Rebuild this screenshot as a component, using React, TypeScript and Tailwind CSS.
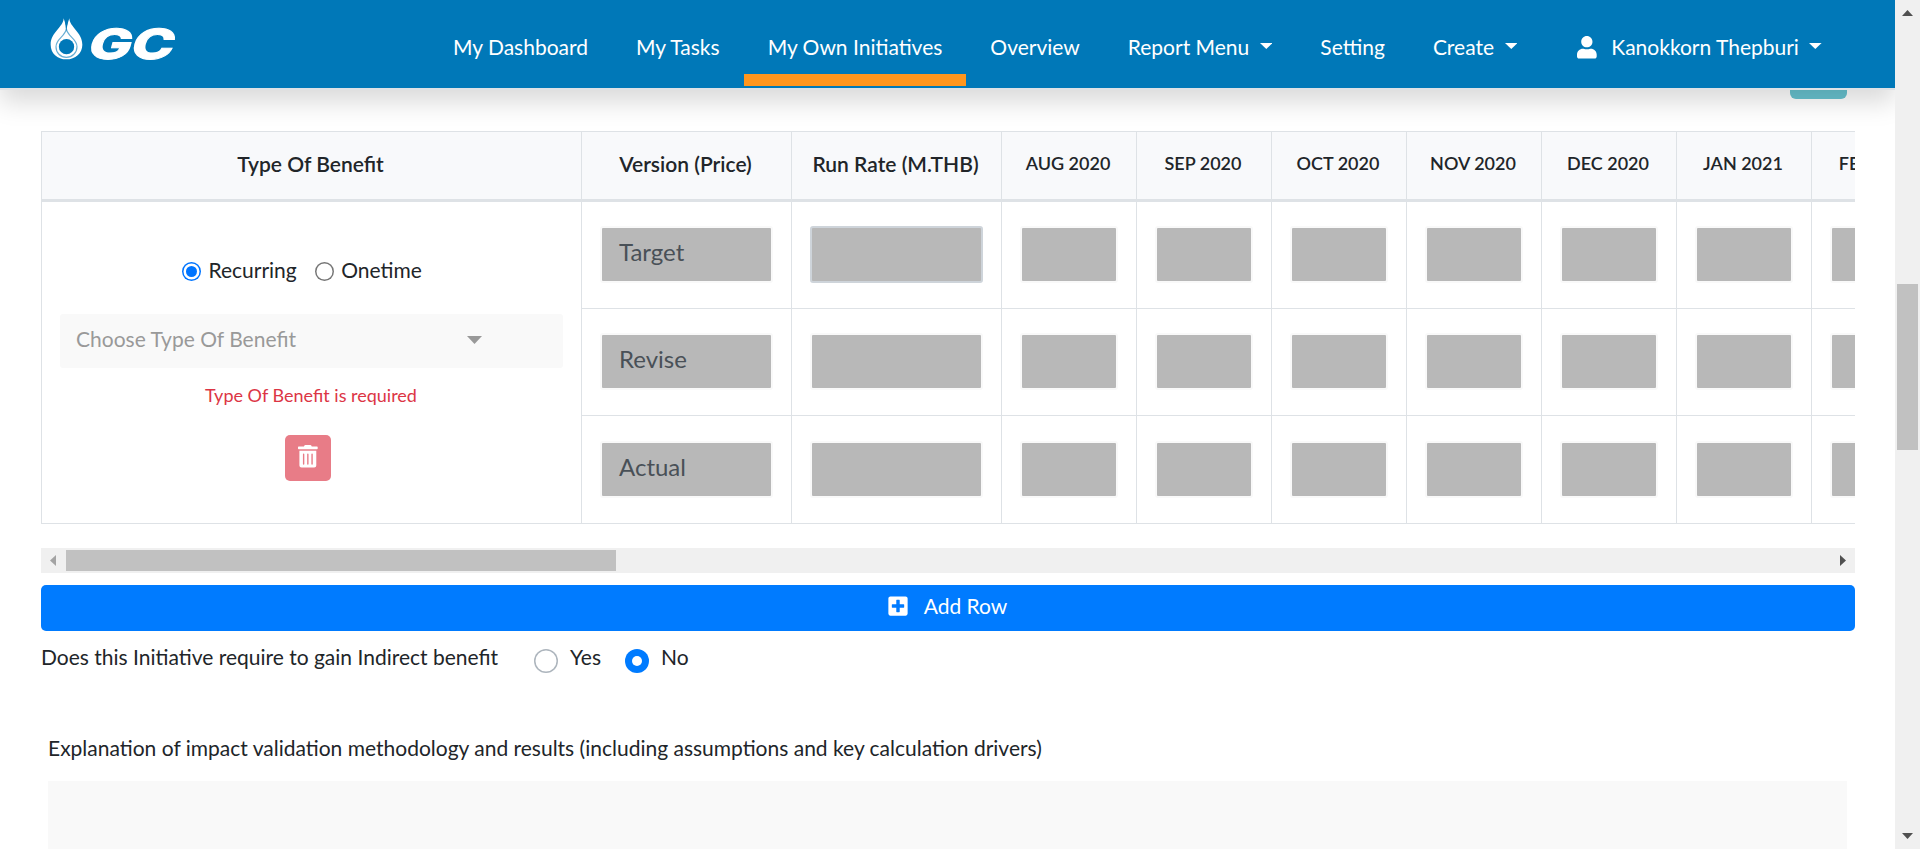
import type { ReactNode } from "react";
import { FaPlusSquare, FaTrashAlt, FaUser } from "react-icons/fa";

const months = ["AUG 2020", "SEP 2020", "OCT 2020", "NOV 2020", "DEC 2020", "JAN 2021", "FEB 2021"];
const versions = ["Target", "Revise", "Actual"];

function Caret({ className = "" }: { className?: string }) {
  return (
    <svg viewBox="0 0 12 6" className={`h-[6px] w-[12.6px] shrink-0 fill-current ${className}`} preserveAspectRatio="none">
      <path d="M0 0h12L6 6z" />
    </svg>
  );
}

function Logo() {
  return (
    <svg viewBox="0 0 408 150" className="mt-[14px] h-[50px] w-[136px] shrink-0 overflow-visible">
      <path
        d="M53 13C52 40 14 55 14 92c0 26 20 44 47 44s48-18 48-44C109 55 71 40 70 13l-7 22h-3z"
        fill="#fff"
      />
      <path d="M56 10l3 30 2 12 2-12 4-30z" fill="#0078b8" />
      <path
        d="M61 44c-3 24-31 30-31 54 0 18 13 32 31 32s32-14 32-32c0-24-29-30-32-54z"
        fill="none"
        stroke="#0078b8"
        strokeOpacity="0.6"
        strokeWidth="3.500"
      />
      <circle cx="61.500" cy="98" r="23" fill="#0078b8" />
      <text
        transform="skewX(-15)"
        x="156"
        y="135"
        textLength="256"
        lengthAdjust="spacingAndGlyphs"
        fill="#fff"
        stroke="#fff"
        strokeWidth="3"
        className="font-['Inter','Liberation_Sans',sans-serif] text-[125px] font-extrabold"
      >
        GC
      </text>
    </svg>
  );
}

function NavItem({ children, active, caret }: { children: ReactNode; active?: boolean; caret?: boolean }) {
  return (
    <a className="flex h-[88px] shrink-0 flex-col pt-[31px]">
      <span className="flex px-6 leading-8 whitespace-nowrap">
        {children}
        {caret && <Caret className="mt-[12px] ml-[10.500px]" />}
      </span>
      {active && <span className="mt-[11px] h-3 bg-[#ff961e]" />}
    </a>
  );
}

function Header() {
  return (
    <header className="relative z-10 flex h-[90px] shrink-0 border-b-2 border-[#dee2e6] bg-[#0078b8] pl-[46px] text-white shadow-[0_12px_24px_rgba(0,0,0,0.15)]">
      <Logo />
      <nav className="ml-[247px] flex">
        <NavItem>My Dashboard</NavItem>
        <NavItem>My Tasks</NavItem>
        <NavItem active>My Own Initiatives</NavItem>
        <NavItem>Overview</NavItem>
        <NavItem caret>Report Menu</NavItem>
        <NavItem>Setting</NavItem>
        <NavItem caret>Create</NavItem>
      </nav>
      <div className="ml-9 flex pt-[31px] leading-8 whitespace-nowrap">
        <FaUser className="mt-[5px] mr-[14.500px] h-[22.500px] w-[19.700px]" />
        Kanokkorn Thepburi
        <Caret className="mt-[12px] ml-[10.500px]" />
      </div>
    </header>
  );
}

function HeadCell({ children, className }: { children: ReactNode; className: string }) {
  return (
    <div className={`shrink-0 border-r border-[#dee2e6] pr-[2px] text-center font-semibold whitespace-nowrap ${className}`}>
      {children}
    </div>
  );
}

function Field({ value, className, border }: { value?: string; className: string; border?: boolean }) {
  return (
    <div className={`shrink-0 border-r border-[#dee2e6] px-[18px] ${className}`}>
      <div
        className={`h-[57px] rounded-[3px] border-2 bg-[#b8b8b8] pl-[17px] text-[24px] leading-[47px] text-[#495057] ${
          border ? "border-[#ced4da]" : "border-[#f9f9f9]"
        }`}
      >
        {value}
      </div>
    </div>
  );
}

function BenefitCell() {
  return (
    <div className="w-[540px] shrink-0 border-r border-b border-[#dee2e6] pt-[54px]">
      <div className="flex h-7 items-center pl-[140px] leading-7">
        <span className="mt-[3px] flex size-[19px] items-center justify-center rounded-full shadow-[inset_0_0_0_1.5px_#0075ff]">
          <span className="size-[11.500px] rounded-full bg-[#0075ff]" />
        </span>
        <span className="ml-[7.500px]">Recurring</span>
        <span className="mt-[3px] ml-[18px] size-[19px] rounded-full shadow-[inset_0_0_0_1.5px_#767676]" />
        <span className="ml-[7.500px]">Onetime</span>
      </div>
      <div className="mx-[18px] mt-[30px] flex h-[54px] justify-between rounded-[3px] bg-[#f9f9f9] pr-[81px] pl-[16px] leading-[49px] text-[#999]">
        Choose Type Of Benefit
        <svg viewBox="0 0 15 8" className="mt-[22px] h-2 w-[15px] fill-[#999]">
          <path d="M0 0h15L7.500 8z" />
        </svg>
      </div>
      <p className="mt-[15px] pr-px text-center text-[18px] leading-6 text-[#dc3545]">Type Of Benefit is required</p>
      <div className="mt-7 flex justify-center pr-[7px]">
        <button className="flex size-[46px] justify-center rounded-[5px] bg-[#e87c87] pt-[10px] text-white">
          <FaTrashAlt className="h-[22.500px] w-[19.700px]" />
        </button>
      </div>
    </div>
  );
}

function BenefitTable() {
  return (
    <div className="mt-8 h-[393px] shrink-0 overflow-hidden border-t border-l border-[#dee2e6]">
      <div className="w-[1905px]">
        <div className="flex h-[70px] border-b-3 border-[#dee2e6] bg-[#f8f9fb]">
          <HeadCell className="w-[540px] leading-[64px]">Type Of Benefit</HeadCell>
          <HeadCell className="w-[210px] leading-[64px]">Version (Price)</HeadCell>
          <HeadCell className="w-[210px] leading-[64px]">Run Rate (M.THB)</HeadCell>
          {months.map((m) => (
            <HeadCell key={m} className="w-[135px] text-[18px] leading-[63px]">
              {m}
            </HeadCell>
          ))}
        </div>
        <div className="flex h-[322px]">
          <BenefitCell />
          <div className="flex flex-col">
            {versions.map((v, i) => (
              <div key={v} className={`flex border-b border-[#dee2e6] ${i === 2 ? "h-[108px]" : "h-[107px]"}`}>
                <Field value={v} className={i === 2 ? "w-[210px] pt-[25px]" : "w-[210px] pt-6"} />
                <Field border={i === 0} className={i === 2 ? "w-[210px] pt-[25px]" : "w-[210px] pt-6"} />
                {months.map((m) => (
                  <Field key={m} className={i === 2 ? "w-[135px] pt-[25px]" : "w-[135px] pt-6"} />
                ))}
              </div>
            ))}
          </div>
        </div>
      </div>
    </div>
  );
}

function HorizontalScrollbar() {
  return (
    <div className="mt-6 flex h-[25px] shrink-0 items-center bg-[#f0f0f0]">
      <svg viewBox="0 0 6 11" className="ml-[9px] h-[11px] w-[6px] fill-[#a3a3a3]">
        <path d="M6 0v11L0 5.500z" />
      </svg>
      <div className="ml-[10px] h-[21px] w-[550px] bg-[#c1c1c1]" />
      <svg viewBox="0 0 6 11" className="mr-[9px] ml-auto h-[11px] w-[6px] fill-[#505050]">
        <path d="M0 0v11l6-5.500z" />
      </svg>
    </div>
  );
}

function VerticalScrollbar() {
  return (
    <div className="flex w-[25px] shrink-0 flex-col items-center bg-[#f0f0f0]">
      <svg viewBox="0 0 11 6" className="mt-[10px] h-[6px] w-[11px] fill-[#505050]">
        <path d="M0 6h11L5.500 0z" />
      </svg>
      <div className="mt-[268px] h-[166px] w-[21px] bg-[#c1c1c1]" />
      <svg viewBox="0 0 11 6" className="mt-auto mb-[10px] h-[6px] w-[11px] fill-[#505050]">
        <path d="M0 0h11L5.500 6z" />
      </svg>
    </div>
  );
}

export default function App() {
  return (
    <div className="flex h-[849px] w-full overflow-hidden bg-white font-['Lato','Noto_Sans',sans-serif] text-[21px] text-[#212529]">
      <div className="flex w-[1895px] flex-col overflow-hidden">
        <Header />
        <main className="flex flex-1 flex-col pr-10 pl-[41px]">
          <div className="mr-2 h-[9px] w-[57px] shrink-0 self-end rounded-b-[6px] bg-[#68c3d0]" />
          <BenefitTable />
          <HorizontalScrollbar />
          <button className="mt-3 flex h-[46px] shrink-0 justify-center rounded-[5px] bg-[#007bff] pr-[2px] leading-[41px] text-white">
            <FaPlusSquare className="mt-[10px] mr-[15px] size-[22px]" />
            Add Row
          </button>
          <div className="mt-[10px] flex h-8 shrink-0 items-center leading-8">
            <span className="w-[493px]">Does this Initiative require to gain Indirect benefit</span>
            <span className="mt-2 size-6 rounded-full shadow-[inset_0_0_0_1.5px_#adb5bd]" />
            <span className="ml-3 w-[55px]">Yes</span>
            <span className="mt-2 flex size-6 items-center justify-center rounded-full bg-[#007bff]">
              <span className="size-[9.500px] rounded-full bg-white" />
            </span>
            <span className="ml-3">No</span>
          </div>
          <p className="mt-[59px] ml-[7px] shrink-0 leading-8">
            Explanation of impact validation methodology and results (including assumptions and key calculation drivers)
          </p>
          <div className="mt-[17px] mr-2 ml-[7px] flex-1 bg-[#f9f9f9]" />
        </main>
      </div>
      <VerticalScrollbar />
    </div>
  );
}
